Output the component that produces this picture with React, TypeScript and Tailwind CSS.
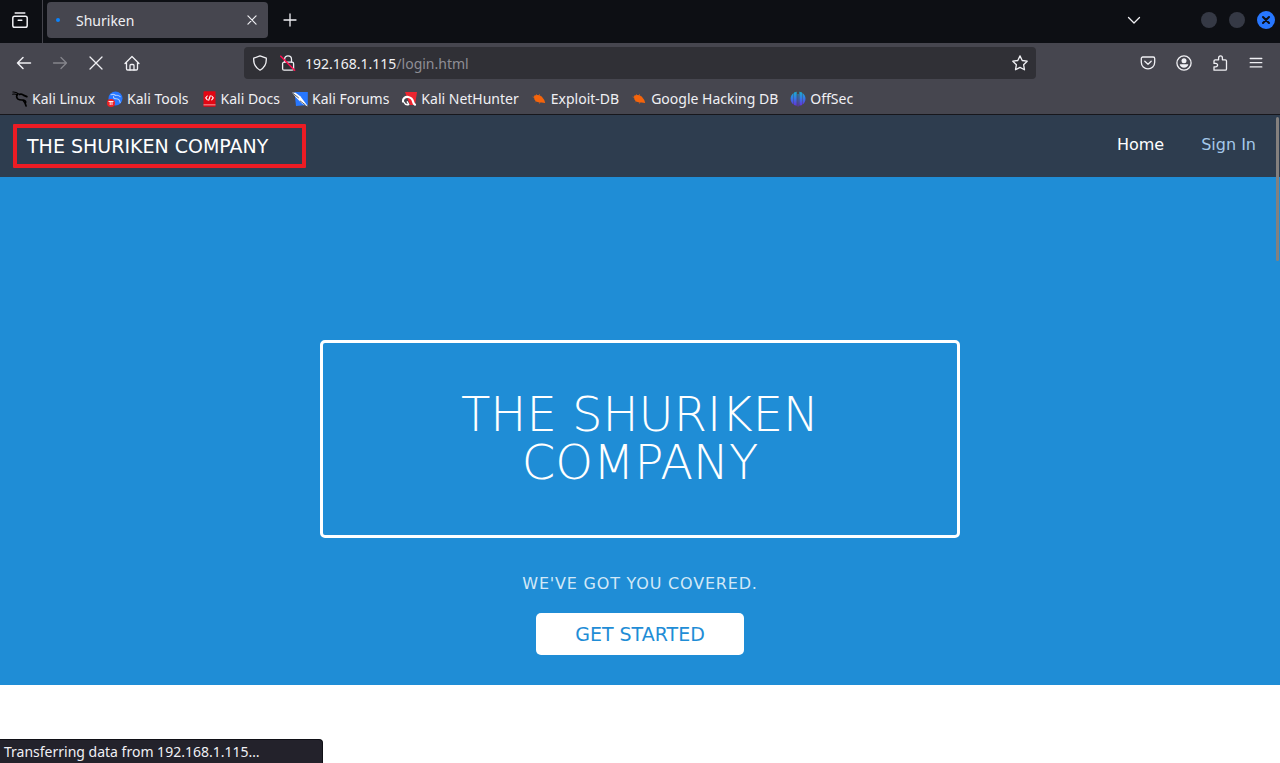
import React from "react";

type IconProps = { children: React.ReactNode; className?: string };

function Icon({ children, className = "size-4" }: IconProps) {
  return (
    <svg
      viewBox="0 0 16 16"
      fill="none"
      stroke="currentColor"
      strokeWidth="1.3"
      strokeLinecap="round"
      strokeLinejoin="round"
      aria-hidden="true"
      className={`shrink-0 ${className}`}
    >
      {children}
    </svg>
  );
}

function IconButton({ label, children, className = "" }: { label: string; children: React.ReactNode; className?: string }) {
  return (
    <button type="button" aria-label={label} className={`flex size-8 shrink-0 items-center justify-center ${className}`}>
      {children}
    </button>
  );
}

const bookmarks: { label: string; icon: React.ReactNode }[] = [
  {
    label: "Kali Linux",
    icon: (
      <Icon className="size-4 text-black">
        <path d="M.8 1c2-.2 3.800.3 5.400 1.600M.6 3.200c1.800-.4 3.400-.1 4.800.8" strokeWidth="1.100" />
        <path d="M5.800 2.800c-1.600 1.600-1.600 4 .2 5.300 1.500 1 3.500.8 5.300 1 1.800.3 2.600 1.300 2.300 2.500" strokeWidth="1.700" />
        <path d="M7.500 3.400c1.800-.7 3.300 0 4.300 1l3 1.200" strokeWidth="1.800" />
        <path d="M11.500 10c1.400 1.200 2 3 2.600 5" strokeWidth="1.600" />
      </Icon>
    ),
  },
  {
    label: "Kali Tools",
    icon: (
      <Icon>
        <circle cx="8.500" cy="7.500" r="7" fill="#2777ff" stroke="none" />
        <path d="M4 3.800c1.800-.8 3.400-.4 4.600.7 1.800-.8 3.200-.1 4.600 1.200M6.500 5.500c-.3 1.700 1 2.300 2.700 2.300 2 0 3.400 1.100 3.900 3.700" stroke="#a9caff" strokeWidth="1.100" />
        <circle cx="4" cy="12" r="4" fill="#ed2024" stroke="none" />
        <path d="M1.900 10.500h4.200M3.200 10.500v3.200M5 10.500v3.200" stroke="#fff" strokeWidth=".9" />
      </Icon>
    ),
  },
  {
    label: "Kali Docs",
    icon: (
      <Icon>
        <path d="M3 .3h11.500v15.400h-12V1z" fill="#e30613" stroke="none" />
        <path d="M2.500 13.400h12v.9h-12z" fill="#f3b0b4" stroke="none" />
        <path d="M6.300 5L4.700 6.900l1.600 1.900M10.700 5l1.600 1.900-1.600 1.900M9.300 4.700L7.700 9.200" stroke="#fff" strokeWidth="1.100" />
      </Icon>
    ),
  },
  {
    label: "Kali Forums",
    icon: (
      <Icon>
        <path d="M2.500 1h13.300v13L4 15z" fill="#2777ff" stroke="none" />
        <path d="M0 1.500l3.500.3 4.800 3.500 3.200 4.200 4.500 6-5.700-2.800-3.300-3.200-3.200-3.300z" fill="#fff" stroke="none" />
        <path d="M.8 2.200l5.700 4.600M8.200 10l5 3.800" stroke="#333a42" strokeWidth=".8" />
      </Icon>
    ),
  },
  {
    label: "Kali NetHunter",
    icon: (
      <Icon>
        <path d="M4 1h12l-2 13H9z" fill="#ed2630" stroke="none" />
        <path d="M2 10.500C1.300 7.700 4 5.600 7.200 6c3.300.5 4.500 2.800 5 5 .2 1 .8 2 1.800 2.700" stroke="#fff" strokeWidth="2.200" />
        <path d="M3 11.300c.8 2 2.600 2.800 4.800 2.200L6.300 10.800" stroke="#fff" strokeWidth="1.400" />
      </Icon>
    ),
  },
  { label: "Exploit-DB", icon: <BugIcon /> },
  { label: "Google Hacking DB", icon: <BugIcon /> },
  {
    label: "OffSec",
    icon: (
      <svg viewBox="0 0 16 16" aria-hidden="true" className="size-4 shrink-0">
        <defs>
          <linearGradient id="offsec" gradientUnits="userSpaceOnUse" x1="0" y1="0" x2="0" y2="16">
            <stop offset="0" stopColor="#16b5c9" />
            <stop offset=".45" stopColor="#3579e8" />
            <stop offset="1" stopColor="#6a25d6" />
          </linearGradient>
        </defs>
        <path d="M3.600 2v11.600C-.4 11 -.4 4.600 3.600 2zM4 1.500L6.700.7v14L4 13.900zM7.600 3h.9v12.500h-.9zM9.400.7l2.700.8v12.400l-2.700.8zM12.500 2c4 2.600 4 9 0 11.600z" fill="url(#offsec)" />
      </svg>
    ),
  },
];

function BugIcon() {
  return (
    <Icon className="size-4 text-[#f4640c]">
      <path d="M3 4.800c2-1.400 5.500-1 7.700.7l2.600 3.600.9 3-3.700-.7c-2.800.4-6-.7-7.200-3.200z" fill="currentColor" stroke="none" />
      <path d="M2 6l2 .7M5.500 3.500l.5 1.300M8.500 3.500l.2 1.200M4.500 11l1-1M8.500 12.300l.3-1" strokeWidth=".6" />
    </Icon>
  );
}

function TabStrip() {
  return (
    <div className="flex h-[43px] items-center bg-[#0d0f14] pb-[3px] text-[#f0f0f4]">
      <div className="flex h-[43px] w-[43px] shrink-0 items-center self-start border-r border-[#44444c] pb-[3px] pl-1">
        <IconButton label="View recent browsing">
          <Icon>
            <rect x=".8" y="4.200" width="14.400" height="11" rx="1.800" strokeWidth="1.500" />
            <path d="M3.200 1h9.600M6.200 8.200h3.600" strokeWidth="1.500" />
          </Icon>
        </IconButton>
      </div>
      <div className="ml-1 flex h-9 w-[221px] items-center rounded bg-[#46464f] pr-1">
        <span className="ml-[9px] mr-4 size-1 rounded-full bg-[#0a84ff]" />
        <span className="flex-1 pt-px text-sm">Shuriken</span>
        <button type="button" aria-label="Close tab" className="flex size-6 items-center justify-center">
          <Icon className="size-2.5">
            <path d="M1.500 1.500l13 13m0-13l-13 13" strokeWidth="1.900" />
          </Icon>
        </button>
      </div>
      <IconButton label="New tab" className="ml-1.5">
        <Icon>
          <path d="M8 2v12M2 8h12" />
        </Icon>
      </IconButton>
      <div className="ml-auto flex items-center">
        <IconButton label="List all tabs">
          <Icon>
            <path d="M2.500 5.500L8 11l5.500-5.500" />
          </Icon>
        </IconButton>
        <div className="ml-[51px] mr-[5px] flex items-center gap-3">
          <button type="button" aria-label="Minimize" className="size-4 rounded-full bg-[#353945]" />
          <button type="button" aria-label="Maximize" className="size-4 rounded-full bg-[#353945]" />
          <button type="button" aria-label="Close window" className="flex size-[18px] items-center justify-center rounded-full bg-[#2777ff] text-[#0d0f14]">
            <Icon className="size-3">
              <path d="M4 4l8 8m0-8l-8 8" strokeWidth="2.800" />
            </Icon>
          </button>
        </div>
      </div>
    </div>
  );
}

function Toolbar() {
  return (
    <div className="flex h-10 items-center bg-[#46464f] pl-2 pr-2 text-[#f0f0f4]">
      <div className="flex w-[236px] items-center gap-1">
        <IconButton label="Back">
          <Icon>
            <path d="M14.500 8h-13M7 2.500L1.500 8 7 13.500" strokeWidth="1.500" />
          </Icon>
        </IconButton>
        <IconButton label="Forward" className="text-[#85858c]">
          <Icon>
            <path d="M1.500 8h13M9 2.500L14.500 8 9 13.500" />
          </Icon>
        </IconButton>
        <IconButton label="Stop">
          <Icon>
            <path d="M2 2l12 12m0-12L2 14" />
          </Icon>
        </IconButton>
        <IconButton label="Home">
          <Icon>
            <path d="M1 8.500l7-7 7 7M2.500 7.500v6.300c0 .7.500 1.200 1.200 1.200h8.600c.7 0 1.200-.5 1.200-1.200V7.500" />
            <path d="M6 15v-4.500c0-.6.400-1 1-1h2c.6 0 1 .4 1 1V15" />
          </Icon>
        </IconButton>
      </div>
      <div className="flex h-8 flex-1 items-center rounded bg-[#303036] px-2">
        <Icon>
          <path d="M8 .9l6.300 2.300c.3 5.200-1.300 9.300-6.300 12C3 12.500 1.400 8.400 1.700 3.200z" />
        </Icon>
        <Icon className="ml-3 size-4">
          <rect x="2.600" y="7.200" width="11" height="8" rx="1.500" />
          <path d="M4.600 7V4.200C4.600 2.300 6 .9 8 .9s3.500 1.400 3.500 3.300V7" />
          <path d="M.8 1.200l13.800 14" stroke="#ff0f50" strokeWidth="1.600" />
        </Icon>
        <div className="ml-[9px] flex-1 pt-px text-sm text-[#8e8e95]" role="textbox" aria-label="Address">
          <span className="text-[#f0f0f4]">192.168.1.115</span>/login.html
        </div>
        <button type="button" aria-label="Bookmark this page">
          <Icon>
            <path d="M8 .9l2.200 4.600 5 .7-3.600 3.500.9 5.100L8 12.400l-4.500 2.400.9-5.100L.8 6.200l5-.7z" />
          </Icon>
        </button>
      </div>
      <div className="ml-24 flex items-center gap-1">
        <IconButton label="Save to Pocket">
          <Icon>
            <path d="M2.800 2h10.400c.9 0 1.500.6 1.500 1.500v3.800c0 3.700-3 6.500-6.700 6.500S1.300 11 1.300 7.300V3.500C1.300 2.600 1.900 2 2.800 2z" />
            <path d="M4.800 6.200L8 9.200l3.200-3" />
          </Icon>
        </IconButton>
        <IconButton label="Account">
          <Icon>
            <circle cx="8" cy="8" r="7.100" />
            <circle cx="8" cy="5.700" r="2.500" fill="currentColor" stroke="none" />
            <path d="M3.700 9.300h8.600c-.3 2-2.100 3.400-4.300 3.400S4 11.300 3.700 9.300z" fill="currentColor" stroke="none" />
          </Icon>
        </IconButton>
        <IconButton label="Extensions">
          <Icon>
            <path d="M2 6c0-.7.500-1.200 1.200-1.200h3.400V2.900c0-1.200.8-2 1.900-2s1.900.8 1.900 2v1.900h2.900c.7 0 1.200.5 1.200 1.200v8c0 .7-.5 1.200-1.200 1.200H2v-3.400h1.700c1.100 0 1.900-.7 1.900-1.700s-.8-1.700-1.900-1.700H2z" />
          </Icon>
        </IconButton>
        <IconButton label="Menu">
          <Icon>
            <path d="M2.200 3.500h11.600M2.200 7.700h11.600M2.200 11.900h11.600" />
          </Icon>
        </IconButton>
      </div>
    </div>
  );
}

function BookmarksBar() {
  return (
    <nav aria-label="Bookmarks" className="flex h-8 items-center gap-3 border-b border-[#17171c] bg-[#46464f] pl-3 text-sm text-[#f0f0f4]">
      {bookmarks.map(({ label, icon }) => (
        <a key={label} href="#" className="flex items-center gap-1 whitespace-nowrap">
          {icon}
          {label}
        </a>
      ))}
    </nav>
  );
}

function Site() {
  return (
    <div className="relative flex-1 bg-white font-['DejaVu_Sans',sans-serif]">
      <header className="flex h-[62px] items-center justify-between bg-[#2e3d4f] pl-[13px] pr-6 text-base text-white">
        <a href="#" className="flex h-11 w-[293px] items-center rounded-[1px] border-4 border-[#ed1c24] pl-2.5 text-[19px]">
          THE SHURIKEN COMPANY
        </a>
        <nav className="flex gap-[37px] pb-0.5" aria-label="Main">
          <a href="#">Home</a>
          <a href="#" className="text-[#a5c9ea]">Sign In</a>
        </nav>
      </header>
      <main className="flex flex-col items-center bg-[#1f8dd6] pb-[30px] pt-[163px]">
        <h1 className="flex h-[198px] w-1/2 items-center justify-center rounded-[5px] border-[3px] border-white px-24 pb-0.5 text-center text-5xl font-extralight leading-[48px] text-white">
          THE SHURIKEN COMPANY
        </h1>
        <p className="mt-[34px] text-base tracking-wider text-[#d2e8f7]">WE'VE GOT YOU COVERED.</p>
        <button type="button" className="mt-[17px] h-[42px] w-52 rounded-[5px] bg-white text-[19px] text-[#1f8dd6]">
          GET STARTED
        </button>
      </main>
      <div className="absolute right-px top-0.5 h-36 w-[3px] rounded-sm bg-[#84807e]" />
    </div>
  );
}

export default function App() {
  return (
    <div className="flex min-h-screen flex-col font-['Noto_Sans',sans-serif]">
      <TabStrip />
      <Toolbar />
      <BookmarksBar />
      <Site />
      <div role="status" className="fixed bottom-0 left-0 flex h-6 w-[323px] items-center rounded-tr border-r border-t border-[#101016] bg-[#23222b] pl-1 text-sm text-[#f0f0f4]">
        Transferring data from 192.168.1.115…
      </div>
    </div>
  );
}
